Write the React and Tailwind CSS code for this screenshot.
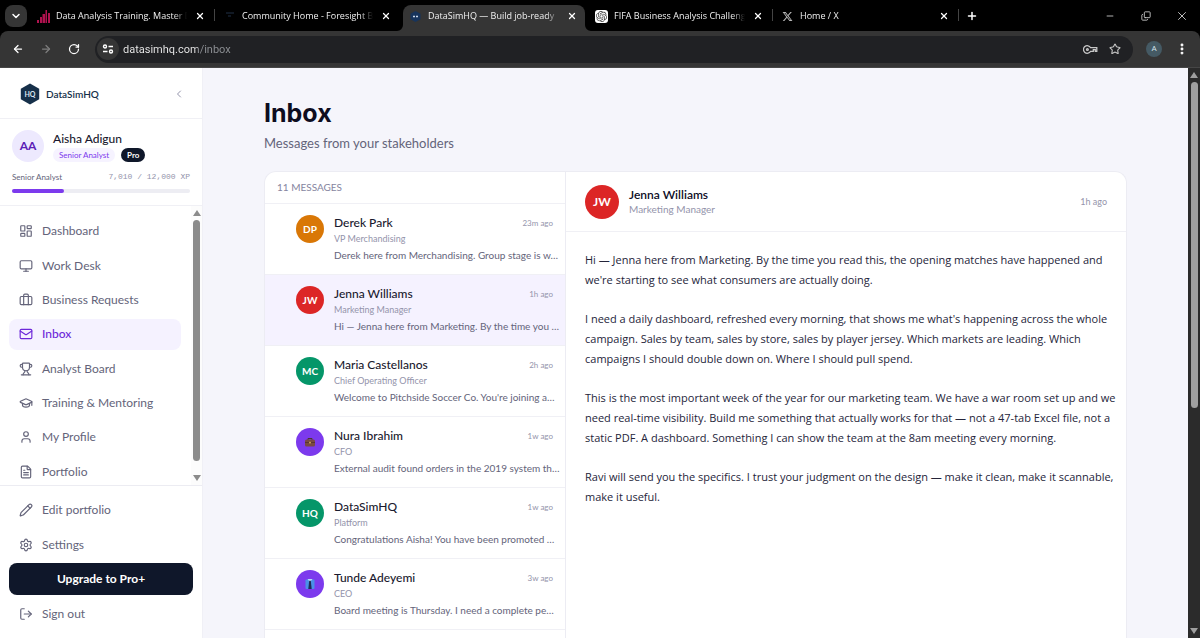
import React from 'react';
import {
  ArrowLeft,
  ArrowRight,
  Briefcase,
  ChevronDown,
  ChevronLeft,
  Copy,
  EllipsisVertical,
  FileText,
  GraduationCap,
  LayoutDashboard,
  LogOut,
  Mail,
  Minus,
  Monitor,
  Pencil,
  Plus,
  RotateCw,
  Settings,
  Star,
  Trophy,
  User,
  X,
} from 'lucide-react';
import { SiOpenai } from 'react-icons/si';
import { FaXTwitter } from 'react-icons/fa6';

const TABS = [
  { title: 'Data Analysis Training. Master D', icon: 'bars' },
  { title: 'Community Home - Foresight B', icon: 'dash' },
  { title: 'DataSimHQ — Build job-ready', icon: 'hq', active: true },
  { title: 'FIFA Business Analysis Challeng', icon: 'openai' },
  { title: 'Home / X', icon: 'x' },
];

const NAV = [
  { label: 'Dashboard', icon: LayoutDashboard },
  { label: 'Work Desk', icon: Monitor },
  { label: 'Business Requests', icon: Briefcase },
  { label: 'Inbox', icon: Mail, active: true },
  { label: 'Analyst Board', icon: Trophy },
  { label: 'Training & Mentoring', icon: GraduationCap },
  { label: 'My Profile', icon: User },
  { label: 'Portfolio', icon: FileText },
];

const MESSAGES = [
  { initials: 'DP', color: 'bg-[#d97706]', name: 'Derek Park', role: 'VP Merchandising', time: '23m ago', preview: 'Derek here from Merchandising. Group stage is w…' },
  { initials: 'JW', color: 'bg-[#dc2626]', name: 'Jenna Williams', role: 'Marketing Manager', time: '1h ago', preview: 'Hi — Jenna here from Marketing. By the time you …', active: true },
  { initials: 'MC', color: 'bg-[#059669]', name: 'Maria Castellanos', role: 'Chief Operating Officer', time: '2h ago', preview: "Welcome to Pitchside Soccer Co. You're joining a…" },
  { art: 'briefcase', color: 'bg-[#7c3aed]', name: 'Nura Ibrahim', role: 'CFO', time: '1w ago', preview: 'External audit found orders in the 2019 system th…' },
  { initials: 'HQ', color: 'bg-[#059669]', name: 'DataSimHQ', role: 'Platform', time: '1w ago', preview: 'Congratulations Aisha! You have been promoted …' },
  { art: 'tie', color: 'bg-[#7c3aed]', name: 'Tunde Adeyemi', role: 'CEO', time: '3w ago', preview: 'Board meeting is Thursday. I need a complete pe…' },
];

const BODY = [
  ['Hi — Jenna here from Marketing. By the time you read this, the opening matches have happened and', "we're starting to see what consumers are actually doing."],
  ["I need a daily dashboard, refreshed every morning, that shows me what's happening across the whole", 'campaign. Sales by team, sales by store, sales by player jersey. Which markets are leading. Which', 'campaigns I should double down on. Where I should pull spend.'],
  ['This is the most important week of the year for our marketing team. We have a war room set up and we', 'need real-time visibility. Build me something that actually works for that — not a 47-tab Excel file, not a', 'static PDF. A dashboard. Something I can show the team at the 8am meeting every morning.'],
  ['Ravi will send you the specifics. I trust your judgment on the design — make it clean, make it scannable,', 'make it useful.'],
];

function Favicon({ kind }) {
  if (kind === 'bars') {
    return (
      <svg viewBox="0 0 13 13" className="w-[13px] h-[13px] shrink-0" fill="#b0124f">
        <rect x="0" y="10" width="2" height="3" />
        <rect x="3" y="7" width="2" height="6" />
        <rect x="5.5" y="4" width="2.5" height="9" />
        <rect x="8.5" y="0" width="1.5" height="13" />
        <rect x="11" y="3" width="2" height="10" />
      </svg>
    );
  }
  if (kind === 'dash') {
    return (
      <svg viewBox="0 0 13 13" className="w-[13px] h-[13px] shrink-0" fill="none" stroke="#16202f" strokeWidth="1.5">
        <path d="M3 3h8M5 6h3" />
      </svg>
    );
  }
  if (kind === 'hq') {
    return (
      <svg viewBox="0 0 13 13" className="w-[13px] h-[13px] shrink-0">
        <path d="M6.5 1l5 2.8v5.5l-5 2.8-5-2.8V3.8z" fill="#17345c" />
        <path d="M4 6.5h2M7 6.5h2" stroke="#c8d6ea" strokeWidth="1.5" />
      </svg>
    );
  }
  if (kind === 'openai') {
    return (
      <span className="w-[13px] h-[13px] shrink-0 rounded-[3px] bg-white flex items-center justify-center">
        <SiOpenai className="w-[11px] h-[11px] text-neutral-700" />
      </span>
    );
  }
  return <FaXTwitter className="w-[13px] h-[11px] shrink-0 text-[#b8b8b8]" />;
}

function BrowserTab({ tab, divider }) {
  return (
    <div className="relative w-[186px] h-[31px] pt-[5px] flex items-stretch min-w-0">
      {tab.active && (
        <>
          <span className="absolute top-[5px] bottom-0 left-[2px] right-[2px] rounded-t-lg bg-[#353535]" />
          <svg viewBox="0 0 6 6" className="absolute bottom-0 -left-1 w-1.5 h-1.5" fill="#353535">
            <path d="M6 0v6H0a6 6 0 0 0 6-6z" />
          </svg>
          <svg viewBox="0 0 6 6" className="absolute bottom-0 -right-1 w-1.5 h-1.5" fill="#353535">
            <path d="M0 0v6h6a6 6 0 0 1-6-6z" />
          </svg>
        </>
      )}
      <div className="relative flex-1 min-w-0 flex items-center gap-1.5 px-2 pb-1">
        <Favicon kind={tab.icon} />
        <span className="flex-1 min-w-0 whitespace-nowrap text-[9px] text-[#f0f0f0] font-['Open_Sans',sans-serif] [mask-image:linear-gradient(to_right,black_90%,transparent)]">
          {tab.title}
        </span>
        <button aria-label="Close tab" className="w-3.5 h-3.5 flex items-center justify-center text-white">
          <X className="w-2.5 h-2.5" strokeWidth={3} />
        </button>
      </div>
      {divider && <span className="absolute right-0 top-[9px] w-px h-3 bg-[#444]" />}
    </div>
  );
}

function BrowserChrome() {
  return (
    <header className="shrink-0 bg-black text-white font-['Roboto',sans-serif]">
      <div className="h-[31px] flex items-start">
        <button aria-label="Search tabs" className="w-[22px] h-[22px] mt-[5px] ml-[5px] mr-0.5 shrink-0 rounded-lg bg-[#353535] flex items-center justify-center">
          <ChevronDown className="w-3 h-3" strokeWidth={3} />
        </button>
        {TABS.map((tab, i) => (
          <BrowserTab key={tab.title} tab={tab} divider={i === 0 || i > 2} />
        ))}
        <button aria-label="New tab" className="w-[26px] h-[31px] flex items-center justify-center">
          <Plus className="w-3 h-3" strokeWidth={3} />
        </button>
        <div className="ml-auto flex text-[#d6d6d6]">
          <button aria-label="Minimize" className="w-9 h-[31px] flex items-center justify-center"><Minus className="w-2.5 h-2.5" /></button>
          <button aria-label="Restore" className="w-9 h-[31px] flex items-center justify-center"><Copy className="w-2.5 h-2.5 -scale-x-100 rotate-180" /></button>
          <button aria-label="Close" className="w-9 h-[31px] flex items-center justify-center"><X className="w-3.5 h-3.5" strokeWidth={1.5} /></button>
        </div>
      </div>
      <div className="h-[37px] rounded-t-lg bg-[#353535] flex items-center pl-3 pr-2.5 border-b border-[#464646]">
        <button aria-label="Back" className="w-7 flex"><ArrowLeft className="w-3 h-3" strokeWidth={2.5} /></button>
        <button aria-label="Forward" className="w-7 flex text-[#7d7d7d]"><ArrowRight className="w-3 h-3" strokeWidth={2.5} /></button>
        <button aria-label="Reload" className="w-[27px] flex"><RotateCw className="w-3 h-3" strokeWidth={2.5} /></button>
        <div className="flex-1 h-[27px] rounded-full bg-[#202124] flex items-center pl-0.5 pr-3">
          <span className="w-[22px] h-[22px] rounded-full bg-[#353535] flex items-center justify-center">
            <svg viewBox="0 0 12 12" className="w-3 h-3" fill="none" stroke="white" strokeWidth="1.4">
              <circle cx="3" cy="3.5" r="1.5" />
              <path d="M6.5 3.5H11M1 8.5h4.5" />
              <circle cx="9" cy="8.5" r="1.5" />
            </svg>
          </span>
          <input
            aria-label="Address"
            readOnly
            value="datasimhq.com/inbox"
            className="flex-1 min-w-0 ml-1 pt-0.5 outline-none text-[11px] text-transparent bg-clip-text bg-[linear-gradient(to_right,#f1f1f1_75px,#8f9296_75px)]"
          />
          <svg viewBox="0 0 15 10" className="w-[15px] h-2.5 mr-[11px]" fill="none" stroke="#c7c7c7" strokeWidth="1.3">
            <path d="M7.6 3.7H13.8v3.6h-1.5v-1.6h-2v1.6H7.6a3.8 3.8 0 1 1 0-3.6z" />
            <circle cx="4.4" cy="5.5" r="0.9" />
          </svg>
          <Star className="w-3 h-3 text-[#c7c7c7]" strokeWidth={2.2} />
        </div>
        <span className="w-4 h-4 ml-[13px] mr-3 rounded-full bg-[#455a64] text-[#d5e6ee] text-[8px] flex items-center justify-center">A</span>
        <button aria-label="Menu" className="w-4 flex justify-center"><EllipsisVertical className="w-3.5 h-3.5" strokeWidth={3} /></button>
      </div>
    </header>
  );
}

function AvatarArt({ kind }) {
  if (kind === 'briefcase') {
    return (
      <svg viewBox="0 0 12 10" className="w-3 h-2.5">
        <path d="M4 3V1.5h4V3" fill="none" stroke="#4a3530" strokeWidth="1" />
        <rect x="1" y="2.5" width="10" height="7" rx="1.5" fill="#7a4a41" />
        <path d="M1 5.5h10" stroke="#5b362f" strokeWidth="1" />
        <rect x="5" y="4.8" width="2" height="1.6" fill="#c59a52" />
      </svg>
    );
  }
  return (
    <svg viewBox="0 0 10 10" className="w-2.5 h-2.5">
      <rect x="0.5" y="0.5" width="9" height="9.5" rx="1" fill="#4a90e8" />
      <path d="M2.5 0h5L5 3z" fill="#bcd9fb" />
      <path d="M4.2 1.8h1.6l.9 8.2H3.3z" fill="#1f2a5a" />
    </svg>
  );
}

function NavItem({ label, icon: Icon, active }) {
  return (
    <a
      href="#"
      className={`h-[31px] rounded-lg flex items-center gap-[9px] px-2.5 text-xs ${active ? 'bg-[#f5f2ff] text-[#6d28d9] font-medium' : 'text-[#64647a]'}`}
    >
      <Icon className="w-3.5 h-3.5 shrink-0" strokeWidth={2} />
      {label}
    </a>
  );
}

function Sidebar() {
  return (
    <aside className="w-[203px] shrink-0 flex flex-col bg-white border-r border-[#f0f0f6]">
      <div className="h-[51px] shrink-0 flex items-center gap-1.5 pl-5 pr-[17px] pt-0.5 border-b border-[#f0f0f5]">
        <svg viewBox="0 0 20 22" className="w-5 h-[22px]">
          <path d="M10 0.5l9.2 5.2v10.6L10 21.5.8 16.3V5.7z" fill="#16304a" />
          <text x="10" y="13.5" textAnchor="middle" fontSize="7" fontWeight="700" fill="#dce6f0">HQ</text>
        </svg>
        <span className="flex-1 text-[10px] font-semibold text-[#16304a]">DataSimHQ</span>
        <button aria-label="Collapse sidebar" className="text-[#9494ab]"><ChevronLeft className="w-3 h-3" /></button>
      </div>

      <div className="h-[87px] shrink-0 pt-[11px] px-3 border-b border-[#f0f0f5]">
        <div className="flex items-center gap-[9px]">
          <span className="w-8 h-8 rounded-full bg-[#ede9fe] text-[#5b21b6] text-xs font-bold flex items-center justify-center">AA</span>
          <div>
            <p className="text-xs leading-[18px] font-medium text-[#1a1a2e]">Aisha Adigun</p>
            <div className="flex items-center gap-1.5 text-[8px] leading-[14px]">
              <span className="rounded-full bg-[#f6f3ff] px-1.5 text-[#7c3aed]">Senior Analyst</span>
              <span className="rounded-full bg-[#0f172a] px-1.5 font-bold text-white">Pro</span>
            </div>
          </div>
        </div>
        <div className="mt-[9px] flex items-center justify-between text-[8px] leading-3 text-[#64647a]">
          <span>Senior Analyst</span>
          <span className="font-['Liberation_Mono',monospace] text-[#9494ab]">7,010 / 12,000 XP</span>
        </div>
        <div className="mt-1.5 h-1 rounded-full bg-[#ededf3]">
          <div className="h-1 w-[29%] rounded-full bg-[#7c3aed]" />
        </div>
      </div>

      <div className="flex-1 min-h-0 flex overflow-hidden">
        <nav className="flex-1 pl-[9px] pr-2.5 pt-2">
          <ul className="h-[275px] grid grid-rows-8 items-center">
            {NAV.map((item) => (
              <li key={item.label}><NavItem {...item} /></li>
            ))}
          </ul>
        </nav>
        <div className="w-[11px] bg-[#fcfcfc] flex flex-col items-center gap-1 py-1">
          <svg viewBox="0 0 8 6" className="w-2 h-1.5" fill="#8b8b8b"><path d="M4 0l4 6H0z" /></svg>
          <span className="flex-1 w-[7px] mb-2.5 rounded-full bg-[#8b8b8b]" />
          <svg viewBox="0 0 8 6" className="w-2 h-1.5" fill="#8b8b8b"><path d="M0 0h8L4 6z" /></svg>
        </div>
      </div>

      <div className="h-[153px] shrink-0 border-t border-[#ececf2] px-[9px] pt-[7px] pb-[7px]">
        <div className="h-full grid grid-rows-4 items-center">
          <NavItem label="Edit portfolio" icon={Pencil} />
          <NavItem label="Settings" icon={Settings} />
          <button className="h-8 rounded-lg bg-[#0f172a] text-white text-xs font-bold">Upgrade to Pro+</button>
          <NavItem label="Sign out" icon={LogOut} />
        </div>
      </div>
    </aside>
  );
}

function MessageRow({ message }) {
  return (
    <li>
      <button
        className={`w-full h-[71px] pt-[11px] pl-[31px] pr-3 flex items-start gap-2.5 text-left border-b border-[#f0f0f5] ${message.active ? 'bg-[#f5f2ff]' : 'bg-white'}`}
      >
        <span className={`w-7 h-7 shrink-0 rounded-full text-white text-[10px] font-bold flex items-center justify-center ${message.color}`}>
          {message.initials || <AvatarArt kind={message.art} />}
        </span>
        <span className="flex-1 min-w-0 block">
          <span className="flex items-center justify-between">
            <span className="text-xs leading-4 font-medium text-[#1a1a2e]">{message.name}</span>
            <span className="text-[8px] leading-4 text-[#9494ab]">{message.time}</span>
          </span>
          <span className="block text-[9px] leading-4 text-[#9494ab]">{message.role}</span>
          <span className="block text-[10px] leading-4 whitespace-nowrap text-[#64647a]">{message.preview}</span>
        </span>
      </button>
    </li>
  );
}

function Inbox() {
  return (
    <main className="flex-1 min-w-0 flex flex-col bg-[#f5f5fb] px-[61px] pt-7">
      <h1 className="text-[25px] leading-[34px] font-bold text-[#0d0d1f] font-['Inter',sans-serif]">Inbox</h1>
      <p className="mt-px text-[13px] leading-6 text-[#64647a]">Messages from your stakeholders</p>
      <div className="mt-4 flex-1 min-h-0 flex rounded-t-xl border border-b-0 border-[#ececf3] bg-white overflow-hidden">
        <section className="w-[301px] shrink-0 border-r border-[#ececf3]">
          <h2 className="h-8 flex items-center pl-3 text-[10px] text-[#8585a0] border-b border-[#f0f0f5]">11 MESSAGES</h2>
          <ul>
            {MESSAGES.map((message) => (
              <MessageRow key={message.name} message={message} />
            ))}
          </ul>
        </section>
        <article className="flex-1 min-w-0">
          <div className="h-[60px] flex items-center gap-2.5 px-[19px] border-b border-[#f0f0f5]">
            <span className="w-[34px] h-[34px] rounded-full bg-[#dc2626] text-white text-xs font-bold flex items-center justify-center">JW</span>
            <div className="flex-1">
              <h3 className="text-xs leading-[14px] font-semibold text-[#0d0d1f]">Jenna Williams</h3>
              <p className="text-[10px] leading-[14px] text-[#9494ab]">Marketing Manager</p>
            </div>
            <span className="text-[9px] text-[#9494ab]">1h ago</span>
          </div>
          <div className="px-[19px] pt-[18px] flex flex-col gap-[19px] text-[11px] leading-5 text-[#25253a] font-['Open_Sans',sans-serif]">
            {BODY.map((lines) => (
              <p key={lines[0]}>
                {lines.map((line) => (
                  <span key={line} className="block whitespace-nowrap">{line}</span>
                ))}
              </p>
            ))}
          </div>
        </article>
      </div>
    </main>
  );
}

export default function App() {
  return (
    <div className="h-screen flex flex-col overflow-hidden font-['Lato',sans-serif]">
      <BrowserChrome />
      <div className="flex-1 min-h-0 flex">
        <Sidebar />
        <Inbox />
        <div className="w-3 shrink-0 bg-[#2b2b2b] flex flex-col items-center py-1">
          <svg viewBox="0 0 8 6" className="w-2 h-1.5" fill="#9f9f9f"><path d="M4 0l4 6H0z" /></svg>
          <span className="mt-1 w-[7px] h-[58%] rounded-full bg-[#9f9f9f]" />
          <svg viewBox="0 0 8 6" className="mt-auto w-2 h-1.5" fill="#9f9f9f"><path d="M0 0h8L4 6z" /></svg>
        </div>
      </div>
    </div>
  );
}
